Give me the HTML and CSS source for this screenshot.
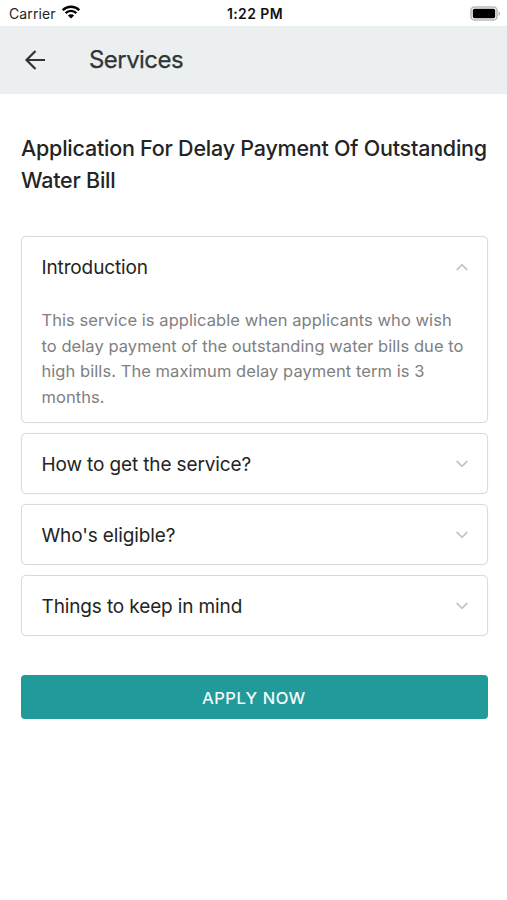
FILE: index.html
```
<!DOCTYPE html>
<html>
<head>
<meta charset="utf-8">
<meta name="viewport" content="width=device-width, initial-scale=1">
<title>Services</title>
<link rel="stylesheet" href="styles.css">
</head>
<body>

<div class="statusbar">
  <div class="carrier">
    <span>Carrier</span>
    <svg class="wifi" width="18" height="14" viewBox="0 0 18 14">
      <path d="M.7 5.2a11.8 11.8 0 0 1 16.6 0M3.6 8.1a7.7 7.7 0 0 1 10.8 0" fill="none" stroke="#000" stroke-width="2.4"/>
      <path d="M5.9 10.5a4.4 4.4 0 0 1 6.2 0L9 13.6z"/>
    </svg>
  </div>
  <span class="time">1:22 PM</span>
  <div class="power">
    <svg class="battery" width="31" height="15" viewBox="0 0 31 15">
      <rect x="1" y="1" width="26" height="13" rx="3.6" fill="#fff" stroke="#b9b9b9" stroke-width="1.6"/>
      <rect x="2.8" y="2.8" width="22.4" height="9.4" rx="1.6"/>
      <path d="M28.5 5.2c2 .8 2 3.8 0 4.6z" fill="#b3b3b3"/>
    </svg>
  </div>
</div>

<header class="topbar">
  <svg class="back" width="22" height="22" viewBox="0 0 22 22">
    <path d="M11.5 2L2.5 11l9 9M2.5 11H21" fill="none" stroke="#2f3334" stroke-width="2.2"/>
  </svg>
  <span class="title">Services</span>
</header>

<div class="container">
  <h1>Application For Delay Payment Of Outstanding<br>Water Bill</h1>

  <div class="accordion">
    <div class="panel">
      <div class="panel-head">
        <span>Introduction</span>
        <svg class="arrow up" width="14" height="10" viewBox="0 0 14 10"><path d="M1.7 2L7 7.3 12.3 2"/></svg>
      </div>
      <p class="panel-body">This service is applicable when applicants who wish<br>to delay payment of the outstanding water bills due to<br>high bills. The maximum delay payment term is 3<br>months.</p>
    </div>
    <div class="panel">
      <div class="panel-head">
        <span>How to get the service?</span>
        <svg class="arrow" width="14" height="10" viewBox="0 0 14 10"><path d="M1.7 2L7 7.3 12.3 2"/></svg>
      </div>
    </div>
    <div class="panel">
      <div class="panel-head">
        <span>Who's eligible?</span>
        <svg class="arrow" width="14" height="10" viewBox="0 0 14 10"><path d="M1.7 2L7 7.3 12.3 2"/></svg>
      </div>
    </div>
    <div class="panel">
      <div class="panel-head">
        <span>Things to keep in mind</span>
        <svg class="arrow" width="14" height="10" viewBox="0 0 14 10"><path d="M1.7 2L7 7.3 12.3 2"/></svg>
      </div>
    </div>
  </div>

  <button type="button" class="apply">APPLY NOW</button>
</div>

</body>
</html>
```
FILE: styles.css
```
* {
    box-sizing: border-box;
}

body {
    margin: 0;
    background-color: #fff;
    font-family: Inter, "Liberation Sans", sans-serif;
    color: #242424;
}

svg {
    display: block;
}

/* Phone status bar */
.statusbar {
    display: grid;
    grid-template-columns: 1fr auto 1fr;
    align-items: center;
    height: 26px;
    padding: 1px 6px 0 9px;
    font-size: 14px;
}

.carrier {
    display: flex;
    align-items: center;
    gap: 6px;
    letter-spacing: 0.1px;
}

.wifi {
    margin-top: -3px;
}

.time {
    font-weight: 600;
    font-size: 14px;
    letter-spacing: 0.4px;
    color: #111;
}

.power {
    display: flex;
    justify-content: flex-end;
}

.battery {
    margin-top: -1px;
}

/* Header with the back arrow */
.topbar {
    display: flex;
    align-items: center;
    gap: 43px;
    height: 68px;
    padding-left: 24px;
    background-color: #ebeff0;
}

.title {
    margin-top: -1px;
    font-size: 24px;
    letter-spacing: -0.55px;
    color: #323536;
    -webkit-text-stroke: 0.25px #323536;
}

.container {
    padding: 38px 19.5px 0 20.5px;
}

h1 {
    margin: 0 0 40px 0.5px;
    font-size: 21.5px;
    font-weight: 500;
    line-height: 32px;
    letter-spacing: -0.23px;
    white-space: nowrap;
}

/* Accordion */
.accordion {
    display: flex;
    flex-direction: column;
    gap: 10px;
}

.panel {
    border: 1px solid #dadada;
    border-radius: 5px;
    box-shadow: 0 0 1px #dadada;
}

.panel-head {
    display: flex;
    align-items: center;
    justify-content: space-between;
    height: 59px;
    padding: 1px 18px 0 20px;
    font-size: 19px;
    letter-spacing: -0.13px;
}

.panel-body {
    margin: 0;
    padding: 12px 0 12px 20px;
    font-size: 16.5px;
    line-height: 25.6px;
    letter-spacing: 0.06px;
    color: #808080;
    white-space: nowrap;
}

.arrow {
    margin-top: -1px;
}

.arrow path {
    fill: none;
    stroke: #c6c6c6;
    stroke-width: 1.8;
}

.up {
    transform: rotate(180deg);
}

.apply {
    display: block;
    width: 100%;
    height: 44px;
    margin-top: 39px;
    padding-top: 2px;
    border: none;
    border-radius: 4px;
    background-color: #209b99;
    color: #fff;
    font-family: inherit;
    font-size: 16.5px;
    letter-spacing: 0.55px;
    -webkit-text-stroke: 0.2px #fff;
    cursor: pointer;
}
```
